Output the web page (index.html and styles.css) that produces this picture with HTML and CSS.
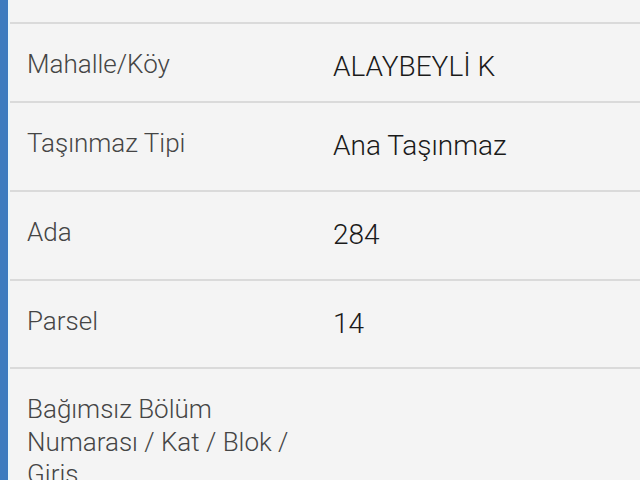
FILE: index.html
```html
<!DOCTYPE html>
<html lang="tr">
<head>
<meta charset="utf-8">
<title>Taşınmaz Bilgileri</title>
<link rel="stylesheet" href="styles.css">
</head>
<body>
<div class="page">
  <div class="accent"></div>
  <div class="edge"></div>
  <div class="table">
    <div class="top-gap"></div>
    <div class="row row-short">
      <div class="label">Mahalle/Köy</div>
      <div class="value">ALAYBEYLİ K</div>
    </div>
    <div class="row">
      <div class="label">Taşınmaz Tipi</div>
      <div class="value">Ana Taşınmaz</div>
    </div>
    <div class="row">
      <div class="label">Ada</div>
      <div class="value">284</div>
    </div>
    <div class="row row-tight">
      <div class="label">Parsel</div>
      <div class="value">14</div>
    </div>
    <div class="row row-last">
      <div class="label">Bağımsız Bölüm Numarası / Kat / Blok / Giris</div>
      <div class="value"></div>
    </div>
  </div>
</div>
</body>
</html>
```

FILE: styles.css
```css
html, body {
  margin: 0;
  padding: 0;
  width: 640px;
  height: 480px;
  overflow: hidden;
  background: #f4f4f4;
  font-family: Roboto, "Liberation Sans", sans-serif;
}

.page {
  display: flex;
  height: 480px;
}

.accent {
  width: 8px;
  background: #3b7cbf;
  flex: none;
}

.edge {
  width: 2px;
  background: #e9f6fb;
  flex: none;
}

.table {
  flex: 1;
  background: #f4f4f4;
  display: flex;
  flex-direction: column;
}

.top-gap {
  height: 22px;
  flex: none;
}

.row {
  display: grid;
  grid-template-columns: 306px 1fr;
  padding-left: 17px;
  border-top: 2px solid #dadada;
  height: 87px;
  flex: none;
  box-sizing: content-box;
}

.row-short {
  height: 77px;
}

.row-tight {
  height: 86px;
}

.row-last {
  height: auto;
  flex: 1;
}

.label {
  padding-top: 24px;
  font-size: 26px;
  font-weight: 300;
  line-height: 32.5px;
  color: #454545;
  padding-right: 20px;
}

.value {
  padding-top: 27px;
  font-size: 28px;
  font-weight: 300;
  line-height: 32px;
  color: #1a1a1a;
}
```
